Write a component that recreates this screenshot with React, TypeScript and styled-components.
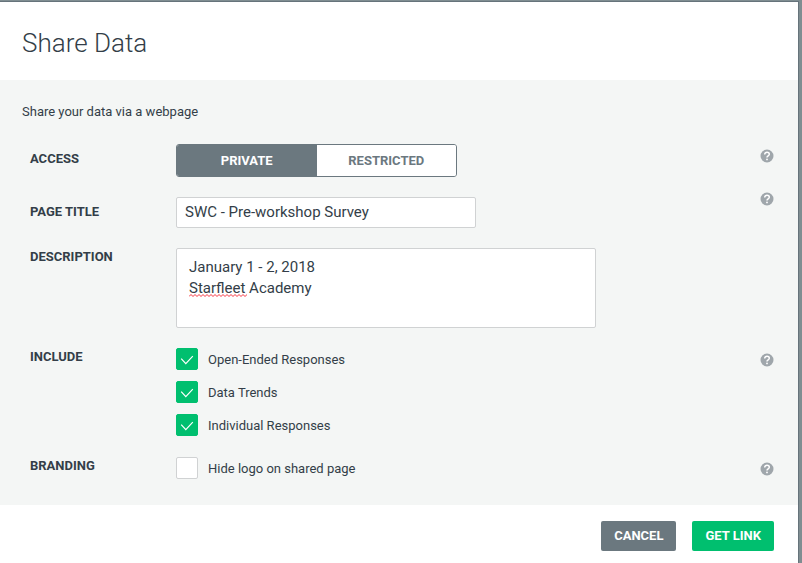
import React, { useState } from "react";
import styled, { createGlobalStyle, css } from "styled-components";

const ink = "#333e48";
const slate = "#6b787f";
const green = "#00bf6f";
const line = "#d0d2d3";

const GlobalStyle = createGlobalStyle`
  *, *::before, *::after { box-sizing: border-box; }
  html, body, #root { height: 100%; }
  body {
    margin: 0;
    background: #7f8d91;
    color: ${ink};
    font: 13px/16px Roboto, "Liberation Sans", sans-serif;
  }
  button, input, textarea { font: inherit; color: inherit; }
`;

const Backdrop = styled.div`
  min-height: 100%;
  display: flex;
  flex-direction: column;
  padding: 1px 3px 0 0;
`;

const Dialog = styled.form`
  flex: 1;
  display: flex;
  flex-direction: column;
  background: #fff;
  border-top: 1px solid #66737b;
  border-right: 1px solid #66737b;
`;

const Header = styled.header`
  padding: 25px 22px 21px;
`;

const Title = styled.h1`
  margin: 0;
  font-size: 26px;
  line-height: 32px;
  font-weight: 300;
`;

const Body = styled.main`
  padding: 24px 22px;
  background: #f4f6f5;
`;

const Intro = styled.p`
  margin: 0 0 24px;
`;

const Rows = styled.div`
  display: flex;
  flex-direction: column;
  gap: 20px;
  padding: 0 2px 0 8px;
`;

const Row = styled.div<{ $raised?: boolean }>`
  display: grid;
  grid-template-columns: 146px minmax(0, 1fr) 14px;
  align-items: start;
  ${({ $raised }) =>
    $raised &&
    css`
      margin-top: -10px;
      > :not(button) {
        margin-top: 10px;
      }
    `}
`;

const labelStyle = css<{ $tall?: boolean }>`
  padding: ${({ $tall }) => ($tall ? "7px" : "1px")} 0 0;
  font-size: 13px;
  line-height: 16px;
  font-weight: 700;
  text-transform: uppercase;
`;

const FieldLabel = styled.label<{ $tall?: boolean }>`
  ${labelStyle}
`;

const GroupLabel = styled.span<{ $tall?: boolean }>`
  ${labelStyle}
`;

const Segments = styled.div`
  display: flex;
  width: 281px;
  max-width: 100%;
  height: 33px;
  border: 1px solid ${slate};
  border-radius: 3px;
  overflow: hidden;
`;

const Segment = styled.button<{ $active: boolean }>`
  flex: 1;
  padding: 0;
  border: 0;
  background: ${({ $active }) => ($active ? slate : "#fff")};
  color: ${({ $active }) => ($active ? "#fff" : slate)};
  font-weight: 700;
  text-transform: uppercase;
  cursor: pointer;
`;

const TextInput = styled.input`
  width: 300px;
  max-width: 100%;
  height: 31px;
  padding: 0 8px 2px;
  border: 1px solid ${line};
  border-radius: 2px;
  background: #fff;
  font-size: 15px;
`;

const AreaWrap = styled.div`
  position: relative;
  width: 420px;
  max-width: 100%;
  height: 80px;
`;

const TextArea = styled.textarea`
  display: block;
  width: 100%;
  height: 100%;
  padding: 8px 12px;
  border: 1px solid ${line};
  border-radius: 2px;
  background: #fff;
  font-size: 15px;
  line-height: 21px;
  resize: none;
`;

const SpellingMark = styled.svg`
  position: absolute;
  left: 13px;
  top: 46px;
  pointer-events: none;
`;

const Options = styled.div`
  display: flex;
  flex-direction: column;
  align-items: flex-start;
  gap: 11px;
  padding-bottom: 1px;
`;

const Option = styled.label`
  display: flex;
  align-items: center;
  gap: 10px;
  line-height: 22px;
  cursor: pointer;
`;

const OptionText = styled.span`
  padding-top: 1px;
  line-height: 21px;
`;

const Box = styled.span`
  position: relative;
  width: 22px;
  height: 22px;
`;

const BoxInput = styled.input`
  appearance: none;
  display: block;
  width: 22px;
  height: 22px;
  margin: 0;
  border: 1px solid ${line};
  border-radius: 2px;
  background: #fff;
  &:checked {
    border-color: ${green};
    background: ${green};
  }
`;

const Tick = styled.svg`
  position: absolute;
  inset: 0;
  pointer-events: none;
`;

const HelpButton = styled.button`
  display: flex;
  align-items: center;
  width: 14px;
  height: 24px;
  padding: 0;
  border: 0;
  background: none;
  cursor: pointer;
`;

const Footer = styled.footer`
  display: flex;
  justify-content: flex-end;
  gap: 16px;
  padding: 16px 24px 12px;
`;

const Action = styled.button<{ $primary?: boolean }>`
  height: 30px;
  padding: 0 13px;
  border: 0;
  border-radius: 2px;
  background: ${({ $primary }) => ($primary ? green : slate)};
  color: #fff;
  font-weight: 700;
  text-transform: uppercase;
  cursor: pointer;
`;

function Help({ topic }: { topic: string }) {
  return (
    <HelpButton type="button" aria-label={`Help: ${topic}`}>
      <svg width="14" height="14" viewBox="0 0 14 14" aria-hidden="true">
        <circle cx="7" cy="7" r="6.5" fill="#9fa6ab" />
        <path
          d="M4.7 5.5C4.7 4 5.7 3.3 7 3.3S9.3 4 9.3 5.3C9.3 6.8 7 6.9 7 8.5"
          fill="none"
          stroke="#fff"
          strokeWidth="1.5"
        />
        <circle cx="7" cy="10.4" r="0.9" fill="#fff" />
      </svg>
    </HelpButton>
  );
}

function Checkbox({ label, initial }: { label: string; initial: boolean }) {
  const [on, setOn] = useState(initial);
  return (
    <Option>
      <Box>
        <BoxInput type="checkbox" checked={on} onChange={() => setOn(!on)} />
        {on && (
          <Tick width="22" height="22" viewBox="0 0 22 22" aria-hidden="true">
            <path d="M5.2 10.7L9.8 15.6L16.8 8.2" fill="none" stroke="#fff" strokeWidth="1.2" />
          </Tick>
        )}
      </Box>
      <OptionText>{label}</OptionText>
    </Option>
  );
}

const accessModes = ["Private", "Restricted"];
const includeOptions = ["Open-Ended Responses", "Data Trends", "Individual Responses"];
const wave = "M0 2.5" + Array.from({ length: 15 }, () => "l2 -2l2 2").join("");

export default function App() {
  const [access, setAccess] = useState("Private");
  const [text, setText] = useState("January 1 - 2, 2018\nStarfleet Academy");

  return (
    <>
      <GlobalStyle />
      <Backdrop>
        <Dialog onSubmit={(e) => e.preventDefault()}>
          <Header>
            <Title>Share Data</Title>
          </Header>
          <Body>
            <Intro>Share your data via a webpage</Intro>
            <Rows>
              <Row>
                <GroupLabel id="access" $tall>Access</GroupLabel>
                <Segments role="group" aria-labelledby="access">
                  {accessModes.map((mode) => (
                    <Segment
                      key={mode}
                      type="button"
                      $active={mode === access}
                      aria-pressed={mode === access}
                      onClick={() => setAccess(mode)}
                    >
                      {mode}
                    </Segment>
                  ))}
                </Segments>
                <Help topic="access" />
              </Row>
              <Row $raised>
                <FieldLabel htmlFor="page-title" $tall>Page title</FieldLabel>
                <TextInput id="page-title" defaultValue="SWC - Pre-workshop Survey" />
                <Help topic="page title" />
              </Row>
              <Row>
                <FieldLabel htmlFor="description">Description</FieldLabel>
                <AreaWrap>
                  <TextArea
                    id="description"
                    spellCheck={false}
                    value={text}
                    onChange={(e) => setText(e.target.value)}
                  />
                  {text.split("\n")[1]?.startsWith("Starfleet") && (
                    <SpellingMark width="58" height="3" viewBox="0 0 58 3" aria-hidden="true">
                      <path d={wave} fill="none" stroke="#f5333f" />
                    </SpellingMark>
                  )}
                </AreaWrap>
              </Row>
              <Row>
                <GroupLabel id="include">Include</GroupLabel>
                <Options role="group" aria-labelledby="include">
                  {includeOptions.map((label) => (
                    <Checkbox key={label} label={label} initial />
                  ))}
                </Options>
                <Help topic="include" />
              </Row>
              <Row>
                <GroupLabel id="branding">Branding</GroupLabel>
                <Options role="group" aria-labelledby="branding">
                  <Checkbox label="Hide logo on shared page" initial={false} />
                </Options>
                <Help topic="branding" />
              </Row>
            </Rows>
          </Body>
          <Footer>
            <Action type="button">Cancel</Action>
            <Action type="submit" $primary>Get link</Action>
          </Footer>
        </Dialog>
      </Backdrop>
    </>
  );
}
